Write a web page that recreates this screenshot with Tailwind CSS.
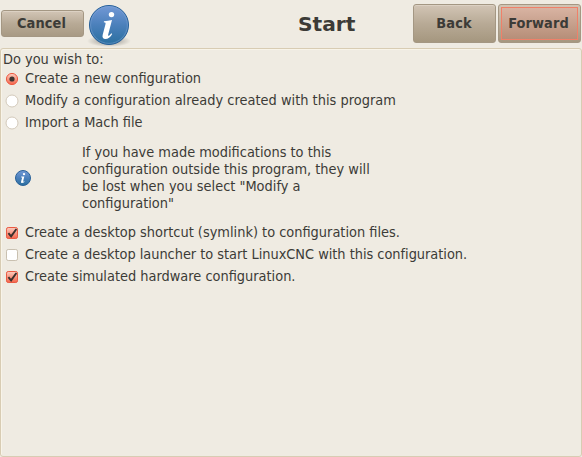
<!DOCTYPE html>
<html lang="en">
<head>
<meta charset="utf-8">
<title>Start</title>
<script src="https://cdn.jsdelivr.net/npm/@tailwindcss/browser@4"></script>
</head>
<body class="h-[457px] w-[582px] overflow-hidden bg-[#efebe2] font-['DejaVu_Sans_Condensed','DejaVu_Sans',sans-serif] text-[14.42px] leading-[17px] text-[#3c3b37] [font-stretch:75%]">
<svg class="absolute size-0" aria-hidden="true">
  <defs>
    <linearGradient id="blue" x1="0" y1="0" x2="0" y2="1">
      <stop offset="0" stop-color="#7399d6"/><stop offset=".5" stop-color="#4b80bb"/><stop offset="1" stop-color="#2a6f9f"/>
    </linearGradient>
    <radialGradient id="shade"><stop offset="0" stop-color="#000" stop-opacity=".4"/><stop offset="1" stop-color="#000" stop-opacity="0"/></radialGradient>
    <linearGradient id="red" x1="0" y1="0" x2="0" y2="1"><stop offset="0" stop-color="#fbcdbf"/><stop offset="1" stop-color="#f4644a"/></linearGradient>
    <symbol id="info" viewBox="0 0 44 48">
      <ellipse cx="22" cy="41" rx="22" ry="6" fill="url(#shade)"/>
      <circle cx="22" cy="25" r="19.5" fill="url(#blue)" stroke="#255f99"/>
      <circle cx="22" cy="25" r="18.4" fill="none" stroke="#86abd9" stroke-opacity=".55" stroke-width=".8"/>
      <ellipse cx="24.5" cy="14.6" rx="2.7" ry="2.6" fill="#fff"/>
      <path d="M17 21.3C19.5 20.8 22.5 20.4 25 19.9L21.2 34.6C20.9 35.8 21.5 36.2 22.3 35.5C23 35 23.6 34.2 24.3 33.3L25.2 34C23.4 37.2 21 39 18.4 39C16 39 15 37.3 15.7 34.8L18.4 24.6C18.9 22.8 18.6 22.3 16.8 22.2Z" fill="#fff"/>
    </symbol>
    <symbol id="info-small" viewBox="0 0 16 16">
      <circle cx="8" cy="8" r="7.5" fill="url(#blue)" stroke="#2a6299"/>
      <circle cx="9" cy="4.1" r="1.2" fill="#fff"/>
      <path d="M6.2 6.6H9.3L8 11.8L9.4 11.3V12.1Q8 13.2 6.4 13Q5.8 12.6 6.1 11.6L7.2 7.4H6.2Z" fill="#fff"/>
    </symbol>
    <symbol id="radio" viewBox="0 0 14 14">
      <circle cx="7" cy="7" r="6" fill="#fff" stroke="#d3cabb"/>
    </symbol>
    <symbol id="radio-on" viewBox="0 0 14 14">
      <circle cx="7" cy="7" r="5.6" fill="url(#red)" stroke="#ee5a42" stroke-width="1"/>
      <circle cx="7" cy="7" r="2.6" fill="#3c3430"/>
    </symbol>
    <symbol id="check" viewBox="0 0 14 14">
      <rect x="1.5" y="1.5" width="11" height="11" rx="1.7" fill="#fff" stroke="#c9c0b0"/>
    </symbol>
    <symbol id="check-on" viewBox="0 0 14 14">
      <rect x="1.5" y="1.5" width="11" height="11" rx="1.7" fill="url(#red)" stroke="#ea5a42"/>
      <path d="M3.4 7.2L6.1 10.4L11.4 3" fill="none" stroke="#3a302c" stroke-width="1.9"/>
    </symbol>
  </defs>
</svg>
<header class="grid h-12 grid-cols-[84px_50px_278px_85px_83px] pl-px font-bold">
  <button class="mt-[10px] h-[27px] w-[83px] rounded-[3px] border border-[#a49783] bg-linear-to-b from-[#d2c5b5] via-[#b8aa96] to-[#a89a84] pr-0.5 font-bold tracking-[0.1px] shadow-[inset_0_1px_0_#dcd1c3]">Cancel</button>
  <svg class="ml-0.5 h-12 w-11"><use href="#info"/></svg>
  <h1 class="mt-3 pl-[163px] font-['DejaVu_Sans',sans-serif] text-[20.2px] leading-6 [font-stretch:100%]">Start</h1>
  <button class="mt-1 h-[39px] w-[83px] rounded-[3px] border border-[#a49783] bg-linear-to-b from-[#d2c5b5] via-[#b8aa96] to-[#a5977f] pr-px font-bold tracking-[0.1px] shadow-[inset_0_1px_0_#dcd1c3]">Back</button>
  <button class="mt-1 h-[39px] w-[83px] rounded-[3px] border border-[#a49783] bg-linear-to-b from-[#d2c5b5] to-[#a5977f] p-0.5 font-bold tracking-[0.1px]">
    <span class="flex h-full items-center justify-center border border-[#f08069] bg-linear-to-b from-[#d8b3a2] to-[#b68e78] pr-0.5">Forward</span>
  </button>
</header>
<main class="h-[409px] w-[582px] rounded-[3px] border border-[#d8ccb3] pt-0.5 pl-0.5 shadow-[inset_1px_1px_0_#f8f4e9]">
  <p>Do you wish to:</p>
  <div>
    <label class="flex h-[22px] items-center gap-[6px] pl-0.5"><svg class="size-[14px]"><use href="#radio-on"/></svg><span class="pb-0.5">Create a new configuration</span></label>
    <label class="flex h-[22px] items-center gap-[6px] pl-0.5"><svg class="size-[14px]"><use href="#radio"/></svg><span class="pb-0.5 tracking-[0.02px]">Modify a configuration already created with this program</span></label>
    <label class="flex h-[22px] items-center gap-[6px] pl-0.5"><svg class="size-[14px]"><use href="#radio"/></svg><span class="pb-0.5">Import a Mach file</span></label>
  </div>
  <div class="flex h-[88px] items-center pl-3">
    <svg class="mr-[51px] size-4"><use href="#info-small"/></svg>
    <p>If you have made modifications to this<br>configuration outside this program, they will<br>be lost when you select "Modify a<br>configuration"</p>
  </div>
  <div>
    <label class="flex h-[22px] items-center gap-[6px] pl-0.5"><svg class="size-[14px]"><use href="#check-on"/></svg><span class="pb-0.5">Create a desktop shortcut (symlink) to configuration files.</span></label>
    <label class="flex h-[22px] items-center gap-[6px] pl-0.5"><svg class="size-[14px]"><use href="#check"/></svg><span class="pb-0.5 tracking-[-0.02px]">Create a desktop launcher to start LinuxCNC with this configuration.</span></label>
    <label class="flex h-[22px] items-center gap-[6px] pl-0.5"><svg class="size-[14px]"><use href="#check-on"/></svg><span class="pb-0.5">Create simulated hardware configuration.</span></label>
  </div>
</main>
</body>
</html>
